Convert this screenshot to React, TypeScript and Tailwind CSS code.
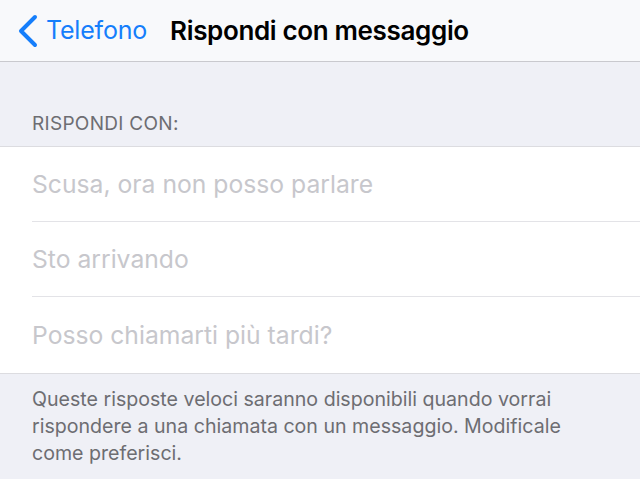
const replies = ['Scusa, ora non posso parlare', 'Sto arrivando', 'Posso chiamarti più tardi?'];

export default function App() {
  return (
    <div className="h-[479px] w-[640px] overflow-hidden bg-[#eff0f6] font-['Inter',sans-serif]">
      <header className="flex h-[62px] items-center border-b border-[#c9c9ce] bg-[#f8f9fb]">
        <div className="flex items-center pl-[16px] text-[#157efb]">
          <svg width="24" height="34" viewBox="0 0 24 34" className="mr-[6px]">
            <path d="M19 3 L5 17 L19 31" fill="none" stroke="currentColor" strokeWidth="4" strokeLinecap="round" strokeLinejoin="round" />
          </svg>
          <span className="text-[25px] tracking-[-0.2px]">Telefono</span>
        </div>
        <h1 className="ml-[23px] text-[26px] font-semibold tracking-[-0.35px] text-black">Rispondi con messaggio</h1>
      </header>

      <div className="px-[32px] pb-[7px] pt-[48px] text-[19px] uppercase tracking-[0.3px] text-[#6d6d72]">Rispondi con:</div>

      <ul className="border-y border-[#dcdce0] bg-white">
        {replies.map((text, i) => (
          <li key={text} className="pl-[32px]">
            <div className={`flex items-center pt-[3px] text-[24.7px] text-[#c7c7cc] ${i < replies.length - 1 ? 'h-[75px] border-b border-[#e3e3e7]' : 'h-[76px]'}`}>
              {text}
            </div>
          </li>
        ))}
      </ul>

      <p className="px-[32px] pt-[12px] text-[19.6px] leading-[27px] text-[#6d6d72]">
        Queste risposte veloci saranno disponibili quando vorrai rispondere a una chiamata con un messaggio. Modificale come preferisci.
      </p>
    </div>
  );
}
